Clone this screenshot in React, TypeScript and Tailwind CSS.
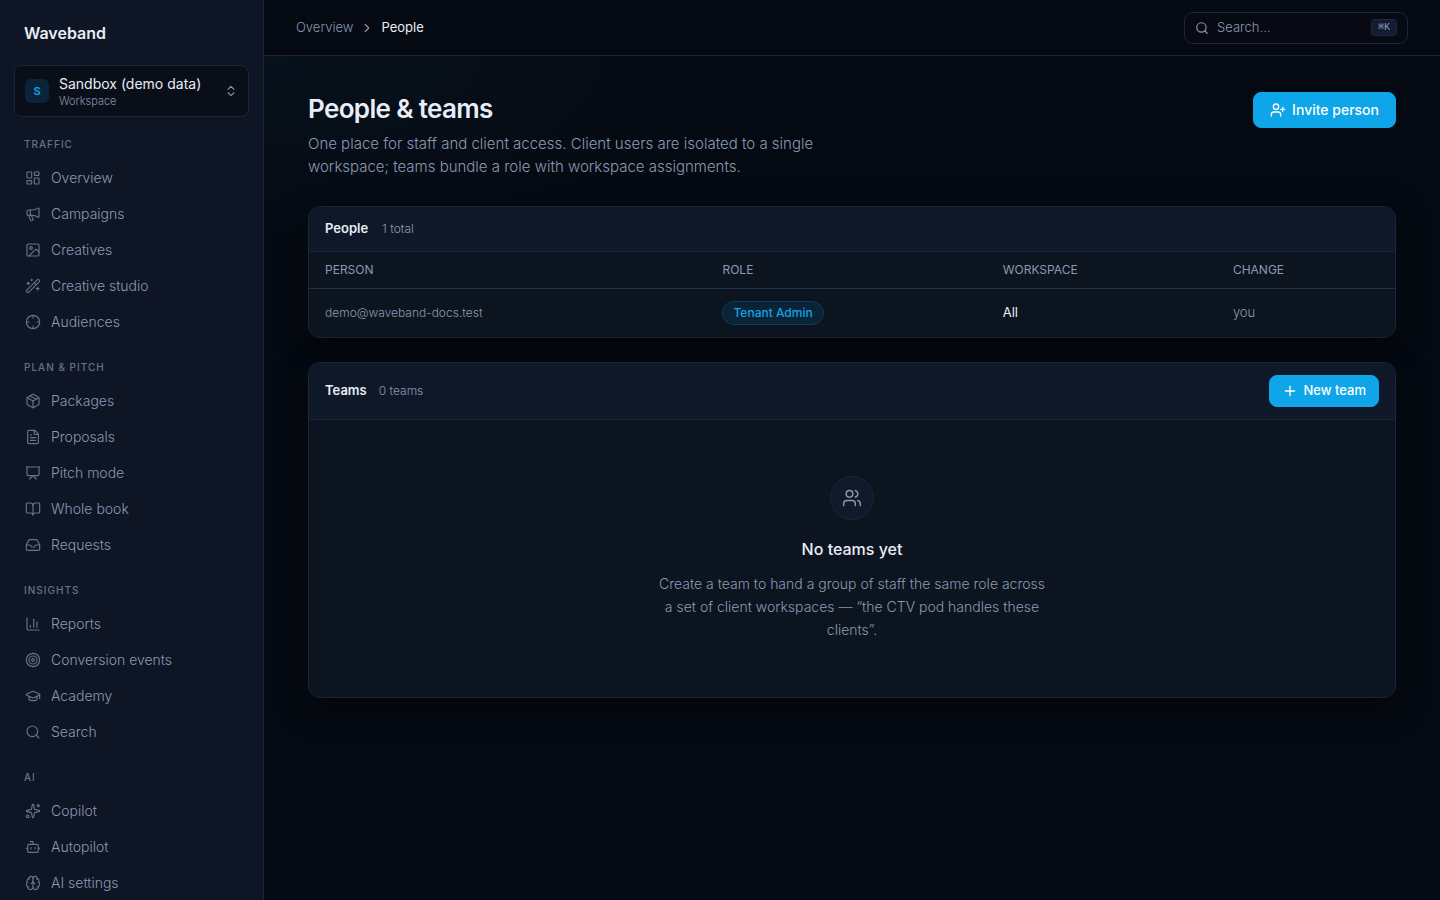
import type { ReactNode } from 'react';
import {
  BookOpen,
  Bot,
  Brain,
  ChartColumn,
  ChevronRight,
  ChevronsUpDown,
  Crosshair,
  FileText,
  GraduationCap,
  Image,
  Inbox,
  LayoutDashboard,
  Megaphone,
  Package,
  Plus,
  Presentation,
  Search,
  Sparkles,
  Target,
  UserPlus,
  Users,
  WandSparkles,
  type LucideIcon,
} from 'lucide-react';

type NavItem = { label: string; icon: LucideIcon };

const NAV: { title: string; items: NavItem[] }[] = [
  {
    title: 'Traffic',
    items: [
      { label: 'Overview', icon: LayoutDashboard },
      { label: 'Campaigns', icon: Megaphone },
      { label: 'Creatives', icon: Image },
      { label: 'Creative studio', icon: WandSparkles },
      { label: 'Audiences', icon: Crosshair },
    ],
  },
  {
    title: 'Plan & pitch',
    items: [
      { label: 'Packages', icon: Package },
      { label: 'Proposals', icon: FileText },
      { label: 'Pitch mode', icon: Presentation },
      { label: 'Whole book', icon: BookOpen },
      { label: 'Requests', icon: Inbox },
    ],
  },
  {
    title: 'Insights',
    items: [
      { label: 'Reports', icon: ChartColumn },
      { label: 'Conversion events', icon: Target },
      { label: 'Academy', icon: GraduationCap },
      { label: 'Search', icon: Search },
    ],
  },
  {
    title: 'AI',
    items: [
      { label: 'Copilot', icon: Sparkles },
      { label: 'Autopilot', icon: Bot },
      { label: 'AI settings', icon: Brain },
    ],
  },
];

export default function App() {
  return (
    <div className="flex h-screen overflow-hidden bg-[#050911] font-['Inter',sans-serif] text-[#e8edf7]">
      <Sidebar />
      <div className="flex min-w-0 flex-1 flex-col">
        <TopBar />
        <main className="flex-1 overflow-hidden bg-[radial-gradient(ellipse_520px_220px_at_0%_0%,#07111b,#050911)] px-11 pt-9">
          <PageHeader />
          <PeopleCard />
          <TeamsCard />
        </main>
      </div>
    </div>
  );
}

function Sidebar() {
  return (
    <aside className="w-66 shrink-0 overflow-hidden border-r border-[#1a2436] bg-[#0e1524] px-3.5">
      <div className="flex h-[65px] items-center px-2.5 text-base font-semibold">Waveband</div>
      <button className="flex h-[52px] w-full items-center gap-2.5 rounded-lg border border-[#1a2538] bg-[#0a0e19] px-2.5 text-left">
        <span className="flex size-6 items-center justify-center rounded-md bg-[#0a2538] text-[11px] font-semibold text-[#0ea5e9]">
          S
        </span>
        <span className="flex-1">
          <span className="block text-sm leading-5">Sandbox (demo data)</span>
          <span className="block text-[11px] leading-3.5 font-light text-[#8492ab]">Workspace</span>
        </span>
        <ChevronsUpDown size={14} className="text-[#8492ab]" />
      </button>

      <nav>
        {NAV.map((group) => (
          <section key={group.title}>
            <h2 className="px-2.5 pt-[19px] pb-2 text-[10px] leading-4 font-medium tracking-widest text-[#65738d] uppercase">
              {group.title}
            </h2>
            {group.items.map(({ label, icon: Icon }) => (
              <a
                key={label}
                href="#"
                className="flex h-9 items-center gap-2.5 rounded-lg border border-transparent px-2.5 text-sm font-light text-[#8b99b3]"
              >
                <Icon size={16} strokeWidth={1.75} className="text-[#65738d]" />
                {label}
              </a>
            ))}
          </section>
        ))}
      </nav>
    </aside>
  );
}

function TopBar() {
  return (
    <header className="flex h-14 shrink-0 items-center justify-between border-b border-[#1a2436] px-8">
      <nav aria-label="Breadcrumb" className="flex items-center gap-[7px] text-[13px]">
        <a href="#" className="font-light text-[#8b99b3]">
          Overview
        </a>
        <ChevronRight size={14} className="text-[#8b99b3]" />
        <span>People</span>
      </nav>
      <label className="flex h-8 w-56 items-center gap-2 rounded-lg border border-[#1a2538] bg-[#070a12] px-2.5">
        <Search size={14} className="text-[#8b99b3]" />
        <input
          type="text"
          aria-label="Search"
          placeholder="Search…"
          className="min-w-0 flex-1 bg-transparent text-[13px] font-light outline-none placeholder:text-[#8b99b3]"
        />
        <kbd className="rounded border border-[#1d2840] bg-[#131c30] px-1.5 font-['Liberation_Mono','DejaVu_Sans_Mono',monospace] text-[10px] leading-[15px] text-[#8b99b3]">
          ⌘K
        </kbd>
      </label>
    </header>
  );
}

function PageHeader() {
  return (
    <div className="mb-7 flex items-start justify-between">
      <div className="max-w-130">
        <h1 className="text-[26px] leading-[34px] font-semibold tracking-tight">People &amp; teams</h1>
        <p className="mt-1.5 text-[15px] leading-[23px] font-light text-[#8b99b3]">
          One place for staff and client access. Client users are isolated to a single workspace; teams bundle a role
          with workspace assignments.
        </p>
      </div>
      <button className="flex h-9 items-center gap-1.5 rounded-lg border border-[#0ea5e9] bg-[#0ea5e9] px-4 text-sm font-medium text-white">
        <UserPlus size={16} />
        Invite person
      </button>
    </div>
  );
}

function Card({ children }: { children: ReactNode }) {
  return (
    <section className="mb-6 overflow-hidden rounded-xl border border-[#1a2538] bg-[#0c1420] shadow-[0_8px_32px_rgba(0,0,0,0.35)]">
      {children}
    </section>
  );
}

function PeopleCard() {
  return (
    <Card>
      <div className="flex h-11 items-center gap-3.5 bg-[#0f1828] px-4">
        <h2 className="text-[13px] font-semibold">People</h2>
        <span className="text-xs font-light text-[#8b99b3]">1 total</span>
      </div>
      <table className="w-full table-fixed border-t border-[#1a2538] text-left">
        <colgroup>
          <col className="w-[36.6%]" />
          <col className="w-[25.8%]" />
          <col className="w-[21.2%]" />
          <col />
        </colgroup>
        <thead>
          <tr className="h-[37px] border-b border-[#22304a] text-xs text-[#8b99b3] uppercase">
            <th className="px-4 font-normal">Person</th>
            <th className="px-4 font-normal">Role</th>
            <th className="px-4 font-normal">Workspace</th>
            <th className="px-4 font-normal">Change</th>
          </tr>
        </thead>
        <tbody>
          <tr className="h-12 text-[13px]">
            <td className="px-4 text-xs font-light text-[#8b99b3]">demo@waveband-docs.test</td>
            <td className="px-4">
              <span className="inline-flex h-6 items-center rounded-full border border-[#0c3d5a] bg-[#0b2336] px-2.5 text-xs font-medium text-[#0ea5e9]">
                Tenant Admin
              </span>
            </td>
            <td className="px-4">All</td>
            <td className="px-4 font-light text-[#8b99b3]">you</td>
          </tr>
        </tbody>
      </table>
    </Card>
  );
}

function TeamsCard() {
  return (
    <Card>
      <div className="flex h-[57px] items-center gap-3 border-b border-[#1a2538] bg-[#0f1828] px-4">
        <h2 className="text-[13px] font-semibold">Teams</h2>
        <span className="text-xs font-light text-[#8b99b3]">0 teams</span>
        <button className="ml-auto flex h-8 items-center gap-1.5 rounded-lg border border-[#0ea5e9] bg-[#0ea5e9] px-3 text-[13px] font-medium text-white">
          <Plus size={16} />
          New team
        </button>
      </div>
      <div className="flex flex-col items-center py-14 text-center">
        <div className="flex size-11 items-center justify-center rounded-full border border-[#1a2538] bg-[#12192a] text-[#8b99b3]">
          <Users size={20} strokeWidth={1.75} />
        </div>
        <h3 className="mt-4 text-base leading-[26px] font-medium">No teams yet</h3>
        <p className="mt-2.5 max-w-[396px] text-sm leading-[23px] font-light text-[#8b99b3]">
          Create a team to hand a group of staff the same role across a set of client workspaces — “the CTV pod handles
          these clients”.
        </p>
      </div>
    </Card>
  );
}
